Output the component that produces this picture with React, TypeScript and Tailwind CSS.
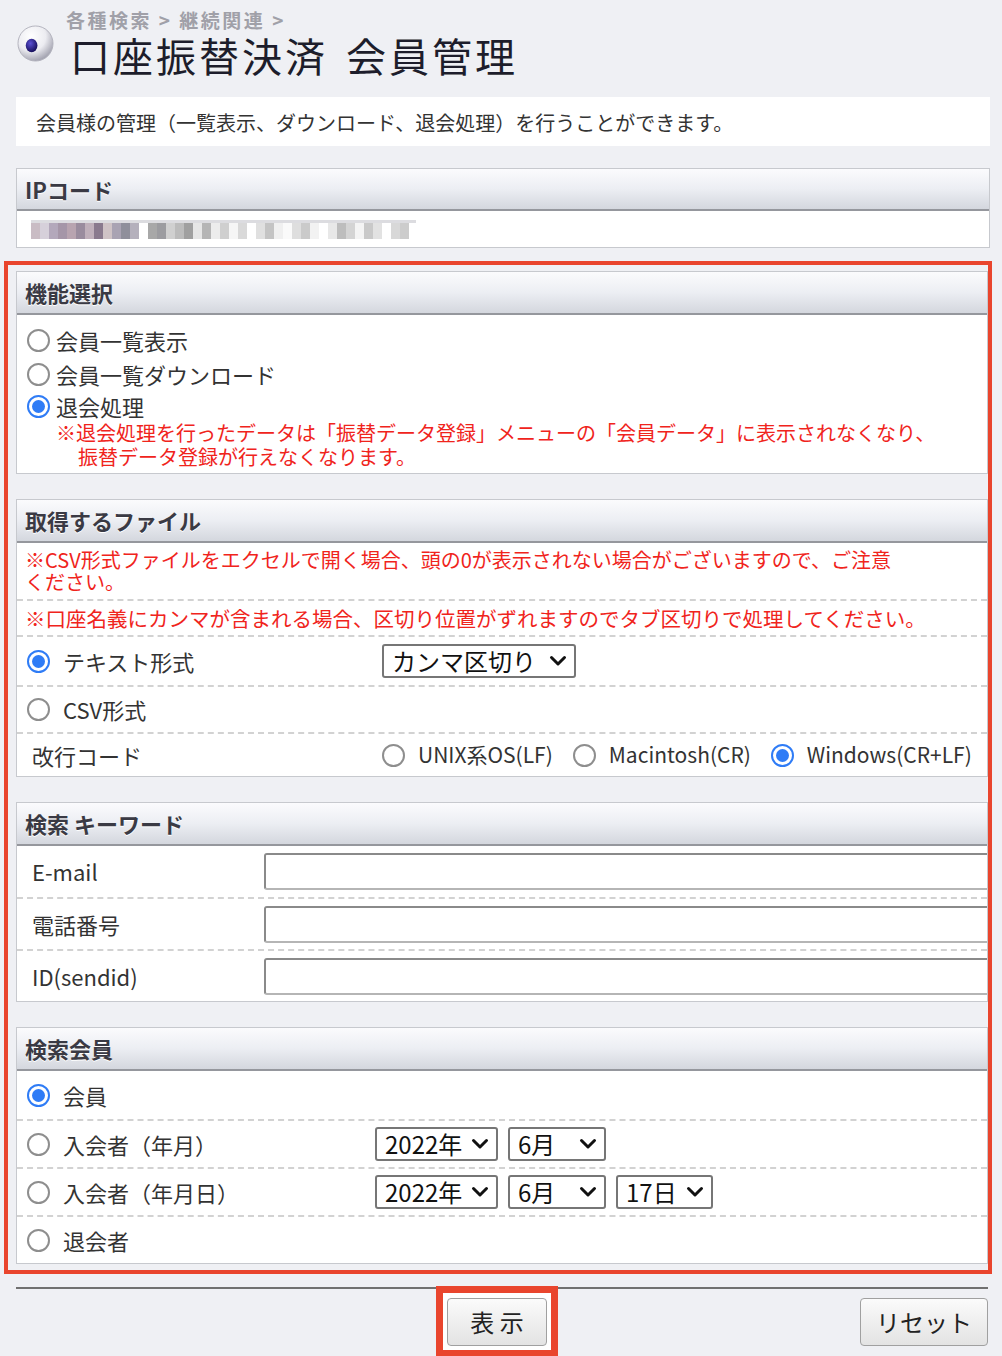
import type { ReactNode } from 'react';

const MOSAIC = [
  '#c9bcc4', '#d6d0da', '#b3a8bb', '#a596a8', '#b8a4b0', '#9a8c9e', '#c0b0bb', '#8a7a8e', '#cfc3c6', '#a9a3b3',
  '#8f8f9b', '#b4b0bc', '#ffffff', '#a8a8a8', '#9c9ca0', '#d0d0d0', '#bcbcbc', '#a0a0a0', '#e6e6e6', '#b5b5b5',
  '#ececec', '#cfcfcf', '#f6f6f6', '#d9d9d9', '#ffffff', '#e0e0e0', '#c4c4c4', '#f0f0f0', '#fafafa', '#dedede',
  '#cacaca', '#f2f2f2', '#ffffff', '#e8e8e8', '#bdbdbd', '#d4d4d4', '#f4f4f4', '#c9c9c9', '#e2e2e2', '#ffffff',
  '#d8d8d8', '#cccccc',
];

function Radio({ checked = false }: { checked?: boolean }) {
  if (checked) {
    return (
      <span className="flex h-[23px] w-[23px] shrink-0 items-center justify-center rounded-full border-2 border-[#2f7cf6] bg-white">
        <span className="h-[13px] w-[13px] rounded-full bg-[#2f7cf6]" />
      </span>
    );
  }
  return <span className="h-[23px] w-[23px] shrink-0 rounded-full border-2 border-[#8e8e8e] bg-white" />;
}

function Section({ title, tall = true, children }: { title: string; tall?: boolean; children: ReactNode }) {
  return (
    <section className="overflow-hidden border border-[#c7c9ce] bg-white">
      <div
        className={`flex items-center border-b-2 border-[#95979d] bg-linear-to-b from-[#fbfbfd] via-[#eceef3] to-[#d4d7de] pl-[8px] text-[22px] font-bold text-[#3a3a44] [text-shadow:0_1px_0_#fff] ${tall ? 'h-[43px]' : 'h-[42px]'}`}
      >
        {title}
      </div>
      {children}
    </section>
  );
}

function Chevron() {
  return (
    <svg width="18" height="12" viewBox="0 0 18 12" className="shrink-0">
      <path d="M2.5 2.5 L9 9 L15.5 2.5" fill="none" stroke="#111" strokeWidth="3" strokeLinecap="round" strokeLinejoin="round" />
    </svg>
  );
}

function Select({ label, className }: { label: string; className: string }) {
  return (
    <div className={`flex h-[34px] items-center justify-between rounded-[3px] border-2 border-[#767676] bg-white pl-[8px] pr-[7px] text-[24px] leading-none text-[#111] ${className}`}>
      <span>{label}</span>
      <Chevron />
    </div>
  );
}

const DASHED = 'border-t-2 border-dashed border-[#d2d2d2]';

export default function App() {
  return (
    <div className="min-h-[1356px] w-[1002px] overflow-hidden bg-[#eff0f4] font-['Noto_Sans_CJK_JP','Noto_Sans',sans-serif] text-[#333]">
      {/* title */}
      <div className="flex pl-[17px] pt-[11px]">
        <div className="mt-[14px]">
          <svg width="37" height="37" viewBox="0 0 38 38">
            <defs>
              <radialGradient id="ball" cx="38%" cy="30%" r="75%">
                <stop offset="0" stopColor="#ffffff" />
                <stop offset="0.55" stopColor="#ececf1" />
                <stop offset="1" stopColor="#9a9aa8" />
              </radialGradient>
              <radialGradient id="dot" cx="40%" cy="35%" r="65%">
                <stop offset="0" stopColor="#5b50d4" />
                <stop offset="1" stopColor="#170f5c" />
              </radialGradient>
            </defs>
            <circle cx="19" cy="19" r="18" fill="url(#ball)" stroke="#b3b3bd" />
            <ellipse cx="15" cy="21" rx="6" ry="7" fill="url(#dot)" />
          </svg>
        </div>
        <div className="ml-[12px] flex flex-col">
          <div className="h-[20px] text-[19px] font-bold leading-[18px] tracking-[2.5px] text-[#a0a0a8]">各種検索 &gt; 継続関連 &gt;</div>
          <div className="mt-[3px] pl-[4px] text-[40px] leading-[42px] tracking-[3px] text-[#1d1d2b]">
            口座振替決済<span className="ml-[18px]">会員管理</span>
          </div>
        </div>
      </div>

      <div className="ml-[16px] mr-[12px] mt-[21px] h-[49px] bg-white pl-[20px] pt-[14px] text-[20px] leading-[24px]">
        会員様の管理（一覧表示、ダウンロード、退会処理）を行うことができます。
      </div>

      <div className="ml-[16px] mr-[12px] mt-[22px]">
        <Section title="IPコード" tall={false}>
          <div className="flex h-[36px] flex-col justify-center pl-[14px]">
            <div className="h-[3px] w-[385px] bg-[#dcdce0] blur-[0.5px]" />
            <div className="flex blur-[0.6px]">
              {MOSAIC.map((c, i) => (
                <span key={i} className="h-[16px] w-[9px]" style={{ backgroundColor: c }} />
              ))}
            </div>
          </div>
        </Section>
      </div>

      {/* highlighted form area */}
      <div className="ml-[4px] mt-[13px] w-[988px] border-4 border-[#e9452d] pb-[6px] pl-[8px] pt-[6px]">
        <div className="flex flex-col gap-[25px]">
          <Section title="機能選択">
            <div className="pb-[4px] pl-[10px] pt-[8px] text-[22px]">
              <div className="flex h-[34px] items-center gap-[6px]">
                <Radio />
                <span>会員一覧表示</span>
              </div>
              <div className="flex h-[34px] items-center gap-[6px]">
                <Radio />
                <span>会員一覧ダウンロード</span>
              </div>
              <div className="flex items-start gap-[6px]">
                <div className="flex h-[30px] items-center">
                  <Radio checked />
                </div>
                <div>
                  <div className="h-[30px] leading-[30px]">退会処理</div>
                  <div className="whitespace-nowrap text-[20px] leading-[24px] text-[#f0241c]">
                    <div>※退会処理を行ったデータは「振替データ登録」メニューの「会員データ」に表示されなくなり、</div>
                    <div className="pl-[22px]">振替データ登録が行えなくなります。</div>
                  </div>
                </div>
              </div>
            </div>
          </Section>

          <Section title="取得するファイル">
            <div className="h-[56px] whitespace-nowrap pl-[8px] pt-[6px] text-[20px] leading-[22px] text-[#f0241c]">
              <div>※CSV形式ファイルをエクセルで開く場合、頭の0が表示されない場合がございますので、ご注意</div>
              <div>ください。</div>
            </div>
            <div className={`flex h-[36px] items-center whitespace-nowrap pl-[8px] text-[20.5px] text-[#f0241c] ${DASHED}`}>
              ※口座名義にカンマが含まれる場合、区切り位置がずれますのでタブ区切りで処理してください。
            </div>
            <div className={`flex h-[50px] items-center ${DASHED}`}>
              <div className="flex w-[365px] items-center gap-[13px] pl-[10px] text-[22px]">
                <Radio checked />
                <span>テキスト形式</span>
              </div>
              <Select label="カンマ区切り" className="w-[194px]" />
            </div>
            <div className={`flex h-[47px] items-center ${DASHED}`}>
              <div className="flex w-[365px] items-center gap-[13px] pl-[10px] text-[22px]">
                <Radio />
                <span>CSV形式</span>
              </div>
            </div>
            <div className={`flex h-[44px] items-center ${DASHED}`}>
              <div className="w-[365px] pl-[15px] text-[22px]">改行コード</div>
              <div className="flex items-center gap-[20px] text-[21px]">
                {[
                  { label: 'UNIX系OS(LF)', checked: false },
                  { label: 'Macintosh(CR)', checked: false },
                  { label: 'Windows(CR+LF)', checked: true },
                ].map((o) => (
                  <div key={o.label} className="flex items-center gap-[13px]">
                    <Radio checked={o.checked} />
                    <span>{o.label}</span>
                  </div>
                ))}
              </div>
            </div>
          </Section>

          <Section title="検索 キーワード">
            {['E-mail', '電話番号', 'ID(sendid)'].map((label, i) => (
              <div key={label} className={`flex items-center ${i === 0 ? 'h-[51px]' : `h-[52px] ${DASHED}`}`}>
                <div className="w-[247px] shrink-0 pl-[15px] text-[22px]">{label}</div>
                <input
                  type="text"
                  className="h-[37px] w-[740px] shrink-0 rounded-[3px] border-2 border-[#8a8a8a] border-b-[#b5b5b5] bg-white"
                />
              </div>
            ))}
          </Section>

          <Section title="検索会員">
            <div className="flex h-[48px] items-center gap-[13px] pl-[10px] text-[22px]">
              <Radio checked />
              <span>会員</span>
            </div>
            <div className={`flex h-[48px] items-center ${DASHED}`}>
              <div className="flex w-[358px] items-center gap-[13px] pl-[10px] text-[22px]">
                <Radio />
                <span>入会者（年月）</span>
              </div>
              <div className="flex gap-[10px]">
                <Select label="2022年" className="w-[123px]" />
                <Select label="6月" className="w-[98px]" />
              </div>
            </div>
            <div className={`flex h-[48px] items-center ${DASHED}`}>
              <div className="flex w-[358px] items-center gap-[13px] pl-[10px] text-[22px]">
                <Radio />
                <span>入会者（年月日）</span>
              </div>
              <div className="flex gap-[10px]">
                <Select label="2022年" className="w-[123px]" />
                <Select label="6月" className="w-[98px]" />
                <Select label="17日" className="w-[97px]" />
              </div>
            </div>
            <div className={`flex h-[48px] items-center gap-[13px] pl-[10px] text-[22px] ${DASHED}`}>
              <Radio />
              <span>退会者</span>
            </div>
          </Section>
        </div>
      </div>

      {/* buttons */}
      <div className="ml-[16px] mt-[13px] w-[972px]">
        <div className="h-[2px] bg-[#707070]" />
        <div className="-mt-[3px] grid grid-cols-[420px_122px_1fr] items-start">
          <div />
          <div className="border-[7px] border-[#e9452d] bg-white px-[4px] pb-[4px] pt-[5px]">
            <button className="h-[48px] w-[100px] rounded-[4px] border-[1.5px] border-[#a0a0a0] bg-linear-to-b from-[#fbfbfb] to-[#e3e3e3] text-[24px] text-[#222]">
              表 示
            </button>
          </div>
          <button className="mt-[12px] h-[48px] w-[128px] justify-self-end rounded-[4px] border-[1.5px] border-[#a0a0a0] bg-linear-to-b from-[#fbfbfb] to-[#e3e3e3] text-[24px] text-[#222]">
            リセット
          </button>
        </div>
      </div>
    </div>
  );
}
